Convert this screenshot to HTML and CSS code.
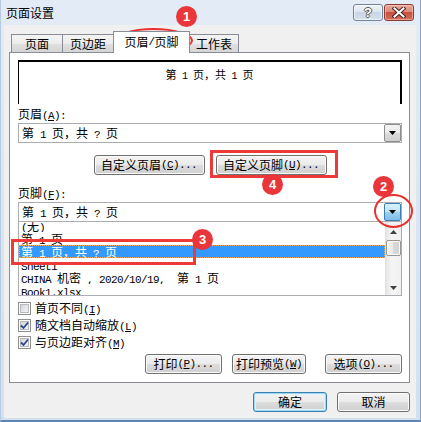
FILE: index.html
```html
<!DOCTYPE html>
<html lang="zh-CN">
<head>
<meta charset="utf-8">
<title>页面设置</title>
<link rel="stylesheet" href="styles.css">
</head>
<body>
<div class="window">
  <div class="titlebar">
    <div class="title">页面设置</div>
    <div class="caption-btns">
      <div class="cbtn help"><span>?</span></div>
      <div class="cbtn close">
        <svg width="14" height="11" viewBox="0 0 14 11"><path d="M2.5 1.5 L11.5 9.5 M11.5 1.5 L2.5 9.5" stroke="#4a2323" stroke-width="4" stroke-linecap="square"/><path d="M2.5 1.5 L11.5 9.5 M11.5 1.5 L2.5 9.5" stroke="#fff" stroke-width="2" stroke-linecap="square"/></svg>
      </div>
    </div>
  </div>
  <div class="client">
    <div class="tabs">
      <div class="tab t1">页面</div>
      <div class="tab t2">页边距</div>
      <div class="tab t3 active">页眉<span class="m">/</span>页脚</div>
      <div class="tab t4">工作表</div>
    </div>
    <div class="panel">
      <div class="preview"><span class="pv">第<span class="m"> 1 </span>页，共<span class="m"> 1 </span>页</span></div>
      <div class="label">页眉<span class="m">(<u>A</u>):</span></div>
      <div class="combo">
        <div class="combo-text">第<span class="m"> 1 </span>页，共<span class="m"> ? </span>页</div>
        <div class="ddbtn"><svg width="7" height="4" viewBox="0 0 7 4"><path d="M0 0 H7 L3.5 4 Z" fill="#000"/></svg></div>
      </div>
      <div class="btn-row center">
        <div class="btn w111">自定义页眉<span class="m">(<u>C</u>)...</span></div>
        <div class="btn w111">自定义页脚<span class="m">(<u>U</u>)...</span></div>
      </div>
      <div class="label l2">页脚<span class="m">(<u>F</u>):</span></div>
      <div class="combo">
        <div class="combo-text">第<span class="m"> 1 </span>页，共<span class="m"> ? </span>页</div>
        <div class="ddbtn hot"><svg width="7" height="4" viewBox="0 0 7 4"><path d="M0 0 H7 L3.5 4 Z" fill="#000"/></svg></div>
      </div>
      <div class="list">
        <div class="items">
          <div class="item first"><span class="m">(</span>无<span class="m">)</span></div>
          <div class="item">第<span class="m"> 1 </span>页</div>
          <div class="item sel">第<span class="m"> 1 </span>页，共<span class="m"> ? </span>页</div>
          <div class="item"><span class="m">Sheet1</span></div>
          <div class="item"><span class="m">CHINA </span>机密<span class="m"> , 2020/10/19,  </span>第<span class="m"> 1 </span>页</div>
          <div class="item"><span class="m">Book1.xlsx</span></div>
        </div>
        <div class="vscroll">
          <div class="sarrow"><svg width="7" height="4" viewBox="0 0 7 4"><path d="M0 4 H7 L3.5 0 Z" fill="#404040"/></svg></div>
          <div class="track"><div class="thumb"></div></div>
          <div class="sarrow"><svg width="7" height="4" viewBox="0 0 7 4"><path d="M0 0 H7 L3.5 4 Z" fill="#404040"/></svg></div>
        </div>
      </div>
      <div class="checks">
        <div class="check"><span class="cb"></span><span>首页不同<span class="m">(<u>I</u>)</span></span></div>
        <div class="check"><span class="cb on"><svg width="9" height="9" viewBox="0 0 9 9"><path d="M1 4.5 L3.5 7 L8 1.5" fill="none" stroke="#2c4a8e" stroke-width="1.8"/></svg></span><span>随文档自动缩放<span class="m">(<u>L</u>)</span></span></div>
        <div class="check"><span class="cb on"><svg width="9" height="9" viewBox="0 0 9 9"><path d="M1 4.5 L3.5 7 L8 1.5" fill="none" stroke="#2c4a8e" stroke-width="1.8"/></svg></span><span>与页边距对齐<span class="m">(<u>M</u>)</span></span></div>
      </div>
      <div class="btn-row end">
        <div class="btn w77">打印<span class="m">(<u>P</u>)...</span></div>
        <div class="btn w74 g10">打印预览<span class="m">(<u>W</u>)</span></div>
        <div class="btn w77 g19">选项<span class="m">(<u>O</u>)...</span></div>
      </div>
    </div>
    <div class="btn-row end dlg">
      <div class="btn w74 default">确定</div>
      <div class="btn w73 g10">取消</div>
    </div>
  </div>

  <div class="anno ellipse e1"></div>
  <div class="anno badge b1">1</div>
  <div class="anno rect r4"></div>
  <div class="anno badge b4">4</div>
  <div class="anno badge b2">2</div>
  <div class="anno ellipse e2"></div>
  <div class="anno rect r3"></div>
  <div class="anno badge b3">3</div>
</div>
</body>
</html>
```
FILE: styles.css
```css
* { box-sizing: border-box; }
html, body { margin: 0; padding: 0; }
body {
  width: 421px;
  height: 422px;
  overflow: hidden;
  font-family: "Noto Sans CJK SC", "Liberation Sans", sans-serif;
  font-size: 12px;
  color: #000;
  background: #dce7f3;
}
u { text-decoration: underline; text-underline-offset: 1px; }
.m {
  font-family: "Liberation Mono", "Noto Sans CJK SC", monospace;
  font-size: 11px;
  letter-spacing: -0.6px;
  white-space: pre;
}

.window {
  position: relative;
  width: 421px;
  height: 422px;
  display: flex;
  flex-direction: column;
  background: linear-gradient(#e3ecf6, #d8e4f1 60%, #d3e0ef);
  border-left: 1px solid #b6cbe2;
  border-right: 1px solid #8aa4c2;
  border-bottom: 2px solid #5f86b3;
  padding: 0 4px 2px 3px;
}

/* title bar */
.titlebar {
  height: 25px;
  display: flex;
  justify-content: space-between;
  align-items: flex-start;
  padding: 4px 2px 0 2px;
}
.title {
  margin-top: 2px;
  line-height: 14px;
  font-size: 12px;
  color: #000;
}
.caption-btns { display: flex; gap: 1px; }
.cbtn {
  width: 30px;
  height: 17px;
  border-radius: 3px;
  display: flex;
  align-items: center;
  justify-content: center;
}
.help {
  border: 1px solid #72849c;
  background: linear-gradient(#eef3f9, #dde6f1 45%, #c8d6e6 50%, #d3dfec);
  box-shadow: inset 0 0 0 1px rgba(255,255,255,0.6);
}
.help span {
  font-family: "Liberation Sans", sans-serif;
  font-weight: bold;
  font-size: 13px;
  line-height: 13px;
  color: #fff;
  text-shadow: 1px 0 #555, -1px 0 #555, 0 1px #555, 0 -1px #555;
}
.close {
  border: 1px solid #8a3a30;
  background: linear-gradient(#e9a89b, #dc8a79 45%, #c7503f 50%, #d2705d);
  box-shadow: inset 0 0 0 1px rgba(255,220,210,0.5);
}

/* client */
.client {
  flex: 1;
  background: #f0f0f0;
  padding: 6px 6px 0 5px;
  display: flex;
  flex-direction: column;
}

.tabs {
  height: 21px;
  display: flex;
  align-items: flex-end;
  padding-left: 2px;
}
.tab {
  height: 18px;
  border: 1px solid #898c95;
  border-bottom: 0;
  background: linear-gradient(#f4f4f4, #ececec 50%, #e0e0e0 50%, #d5d5d5);
  display: flex;
  align-items: center;
  justify-content: center;
  line-height: 14px;
  padding-top: 1px;
}
.t1 { width: 52px; }
.t2 { width: 52px; margin-left: -1px; }
.t3 { width: 77px; margin-left: -1px; }
.t4 { width: 50px; margin-left: -1px; }
.tab.active {
  position: relative;
  z-index: 1;
  height: 22px;
  margin-bottom: -1px;
  background: #fff;
  padding-top: 0;
  padding-bottom: 2px;
}

.panel {
  height: 331px;
  background: #fff;
  border: 1px solid #898c95;
  padding: 7px 7px 8px 8px;
  display: flex;
  flex-direction: column;
}

.preview {
  height: 44px;
  border-top: 2px solid #000;
  border-left: 1px solid #000;
  border-right: 2px solid #000;
  display: flex;
  justify-content: center;
  padding-top: 6px;
  flex-shrink: 0;
}
.pv { font-size: 11px; line-height: 12px; }
.pv .m { font-size: 10px; letter-spacing: -0.5px; }

.label {
  height: 19px;
  line-height: 19px;
  flex-shrink: 0;
}
.label.l2 { margin-top: 8px; }

.combo {
  height: 20px;
  border: 1px solid #abadb3;
  display: flex;
  align-items: stretch;
  flex-shrink: 0;
}
.combo-text {
  flex: 1;
  padding-left: 3px;
  line-height: 18px;
  white-space: pre;
}
.ddbtn {
  width: 17px;
  border: 1px solid #8d8d8d;
  border-radius: 2px;
  background: linear-gradient(#f4f4f4, #ebebeb 50%, #dcdcdc 50%, #cfcfcf);
  display: flex;
  align-items: center;
  justify-content: center;
}
.ddbtn.hot {
  border-color: #3c7fb1;
  background: linear-gradient(#d9effb, #bfe3f8 50%, #9dd1f1 50%, #7fbde8);
}

.btn-row { display: flex; flex-shrink: 0; }
.btn-row.center { justify-content: center; gap: 11px; margin-top: 12px; }
.btn-row.end { justify-content: flex-end; margin-top: 3px; }
.btn-row.dlg { margin-top: 9px; }

.btn {
  height: 20px;
  border: 1px solid #707070;
  border-radius: 3px;
  background: linear-gradient(#f3f3f3, #ebebeb 50%, #dddddd 50%, #cfcfcf);
  box-shadow: inset 0 0 0 1px #fbfbfb;
  display: flex;
  align-items: center;
  justify-content: center;
  line-height: 14px;
  white-space: pre;
}
.btn.default {
  border-color: #3c7fb1;
  box-shadow: inset 0 0 0 1px #9ed7f5, inset 0 0 0 2px #e3f3fc;
}
.w111 { width: 111px; }
.w77 { width: 77px; }
.w74 { width: 74px; }
.w73 { width: 73px; }
.g10 { margin-left: 10px; }
.g19 { margin-left: 19px; }

/* list */
.list {
  height: 74px;
  border: 1px solid #abadb3;
  border-top: 0;
  display: flex;
  flex-shrink: 0;
}
.items {
  flex: 1;
  overflow: hidden;
  padding-top: 0;
}
.item {
  height: 13px;
  line-height: 13px;
  padding-left: 2px;
  white-space: pre;
  overflow: hidden;
}
.item.first { margin-top: -3px; }
.item.sel {
  background: #3399ff;
  color: #fff;
  outline: 1px dotted #f2a65e;
  outline-offset: -1px;
}
.vscroll {
  width: 16px;
  display: flex;
  flex-direction: column;
  background: linear-gradient(to right, #e6e6e6, #f5f5f5 40%, #f0f0f0);
  border-left: 1px solid #e0e0e0;
}
.sarrow {
  height: 17px;
  display: flex;
  align-items: center;
  justify-content: center;
  padding-top: 2px;
}
.track { flex: 1; padding-top: 1px; }
.thumb {
  height: 16px;
  border: 1px solid #979797;
  border-radius: 2px;
  background: linear-gradient(to right, #f5f5f5, #e9e9e9 50%, #d9d9d9 50%, #d3d3d3);
  box-shadow: inset 0 0 0 1px #fbfbfb;
}

/* checkboxes */
.checks { margin-top: 4px; display: flex; flex-direction: column; flex-shrink: 0; }
.check {
  height: 17px;
  display: flex;
  align-items: center;
  gap: 4px;
  white-space: pre;
  line-height: 14px;
}
.cb {
  width: 13px;
  height: 13px;
  border: 1px solid #8e8f8f;
  background: #fff;
  padding: 1px;
  display: flex;
  position: relative;
}
.cb::before {
  content: "";
  flex: 1;
  border: 1px solid #b6b9bf;
  background: linear-gradient(135deg, #d2d5da, #f4f4f4);
}
.cb.on svg {
  position: absolute;
  left: 1px;
  top: 1px;
}

/* annotations */
.anno { position: absolute; pointer-events: none; }
.ellipse { border: 2.5px solid #e8302f; border-radius: 50%; }
.rect { border: 3px solid #ec3a38; }
.badge {
  width: 21px;
  height: 21px;
  border-radius: 50%;
  background: #e8363a;
  color: #fff;
  font-family: "Liberation Sans", sans-serif;
  font-weight: bold;
  font-size: 13px;
  line-height: 21px;
  text-align: center;
}
.e1 { left: 113px; top: 28px; width: 79px; height: 25px; }
.b1 { left: 175px; top: 6px; }
.r4 { left: 209px; top: 150px; width: 128px; height: 28px; }
.b4 { left: 261px; top: 174px; }
.b2 { left: 372px; top: 176px; }
.e2 { left: 373px; top: 194px; width: 39px; height: 34px; }
.r3 { left: 10px; top: 239px; width: 185px; height: 26px; }
.b3 { left: 191px; top: 229px; }
```
